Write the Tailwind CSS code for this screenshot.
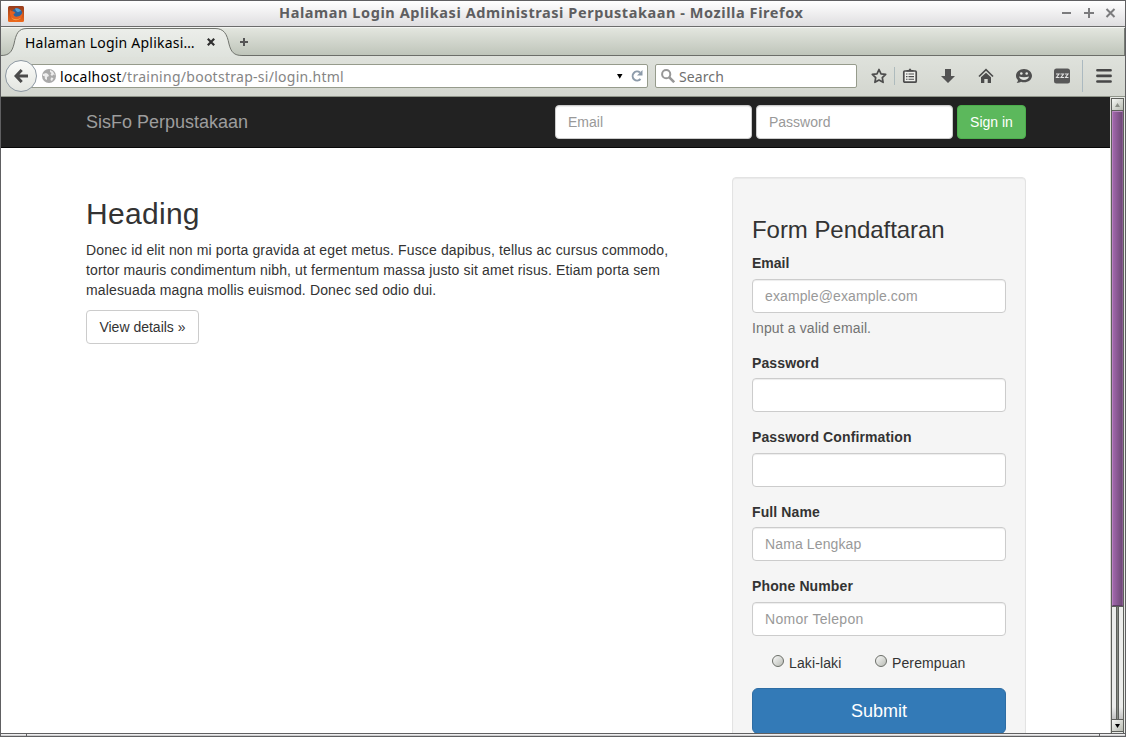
<!DOCTYPE html>
<html lang="id">
<head>
<meta charset="utf-8">
<title>Halaman Login Aplikasi Administrasi Perpustakaan</title>
<script src="https://cdn.jsdelivr.net/npm/@tailwindcss/browser@4"></script>
</head>
<body class="w-[1126px] h-[737px] overflow-hidden bg-white">
<div class="w-[1126px] h-[737px] flex flex-col border border-[#606062] font-['Noto_Sans',sans-serif]">

  <!-- window title bar -->
  <header class="h-[26px] shrink-0 flex items-center pl-[7px] bg-linear-to-b from-white to-[#dfdee0] border-b border-[#6c6c6c]">
    <svg class="w-4 h-4 shrink-0" viewBox="0 0 16 16"><defs><linearGradient id="fx" x1="0" y1="0" x2="0" y2="1"><stop offset="0" stop-color="#963a1a"/><stop offset="1" stop-color="#ef6a1c"/></linearGradient></defs><rect width="16" height="16" rx="1.5" fill="url(#fx)"/><circle cx="9" cy="7.5" r="5.2" fill="#2d659e"/><path d="M7 2.5c2-.8 5 .2 6 2.500-1 .5-2 .2-3 1.200L8 5z" fill="#58a4d6"/><path d="M2 3c0 1 .5 1.500 1 2l3 .5 1.500 1.500-2 1c0 2 2 3 4 2.500 3-.5 4.500-2 5-5 .8 4-.8 8.500-6 8.800C4 14.500 1 10 2 3z" fill="#e8621f"/><path d="M3 11c2 2.500 7 3.300 10 .5-2 3.500-8 4-10-.5z" fill="#f7a545"/></svg>
    <h1 class="ml-[255px] w-[600px] pb-[2px] text-[14.5px] leading-[23px] font-bold text-[#5e5e60] whitespace-nowrap tracking-[0.57px]">Halaman Login Aplikasi Administrasi Perpustakaan - Mozilla Firefox</h1>
    <svg class="ml-[183px] mb-[2px] w-[54px] h-[12px] shrink-0" viewBox="0 0 54 12" fill="none" stroke="#7b7b7d" stroke-width="2"><path d="M0 6h9M22 6h10M27 1v10"/><path d="M44.500 2l8 8M52.500 2l-8 8"/></svg>
  </header>

  <!-- tab strip -->
  <nav class="h-[29px] shrink-0 relative flex items-center bg-linear-to-b from-[#e3e6df] to-[#bfc5ba] border-t border-b border-t-[#f4f5f2] border-b-[#6c6e69]">
    <svg class="absolute left-0 -top-px w-[245px] h-[30px]" viewBox="0 0 245 30"><defs><linearGradient id="tb" x1="0" y1="0" x2="0" y2="1"><stop offset="0" stop-color="#eceeea"/><stop offset="1" stop-color="#dfe3dd"/></linearGradient></defs><path d="M0 30V28.500C8 28.500 11 25 13 17C15 7 17 1.500 26 1.500H214C223 1.500 226 7 228 17C230 25 233 28.500 241 28.500V30Z" fill="url(#tb)"/><path d="M0 28.500C8 28.500 11 25 13 17C15 7 17 1.500 26 1.500H214C223 1.500 226 7 228 17C230 25 233 28.500 241 28.500" fill="none" stroke="#72756f"/></svg>
    <span class="relative ml-[24px] pt-px w-[172px] text-[14px] tracking-[0.22px] text-black whitespace-nowrap">Halaman Login Aplikasi…</span>
    <svg class="relative ml-[10px] w-2 h-2" viewBox="0 0 8 8" stroke="#2f2f2f" stroke-width="2.200"><path d="M.8.8l6.400 6.400M7.200.8L.8 7.200"/></svg>
    <svg class="relative ml-[25px] w-2 h-2" viewBox="0 0 8 8" stroke="#555" stroke-width="2"><path d="M0 4h8M4 0v8"/></svg>
    <i class="ml-auto w-px h-full bg-[#767b74]"></i>
  </nav>

  <!-- toolbar -->
  <div class="h-[41px] shrink-0 flex items-center bg-linear-to-b from-[#dfe2dc] to-[#d3d6cf] border-b border-[#90958a]">
    <div class="relative z-10 ml-[4px] w-8 h-8 shrink-0 rounded-full border border-[#8d98a2] bg-linear-to-b from-[#fafbf9] to-[#e4e6e1] flex items-center justify-center">
      <svg class="w-[14px] h-[14px]" viewBox="0 0 14 14" fill="none" stroke="#4b4b4b" stroke-width="3"><path d="M7.700 1L2 7l5.700 6M2.200 7H14"/></svg>
    </div>
    <div class="-ml-[10px] w-[621px] h-6 shrink-0 flex items-center border border-[#969b8c] bg-white rounded-[2px] pl-[14px]">
      <svg class="w-[14px] h-[14px] shrink-0" viewBox="0 0 14 14"><circle cx="7" cy="7" r="7" fill="#a9a9a9"/><path d="M1 5l3-1 2 1 1 2-2 1v3l-2-1-.5-3L1 7zM8 1l3 1.500 2 4-1.500-1L10 7 8.500 5.500 9.500 4 8 3zM9 8.500l2.500.5L10 12l-1.500-1z" fill="#ededed"/></svg>
      <span class="ml-[4px] pt-px text-[14px] tracking-[0.27px] whitespace-nowrap text-[#858585]"><span class="text-black">localhost</span>/training/bootstrap-si/login.html</span>
      <svg class="ml-auto w-[6px] h-[5px]" viewBox="0 0 6 5"><path d="M0 0h5.500L2.750 4.800z" fill="#000"/></svg>
      <svg class="ml-[8px] mr-[4px] w-[12px] h-[12px]" viewBox="0 0 12 12"><path d="M9.500 9A4.500 4.500 0 1 1 9 2.500" fill="none" stroke="#8d9baa" stroke-width="2"/><path d="M11.500 0v5.500H6z" fill="#8d9baa"/></svg>
    </div>
    <div class="ml-[7px] w-[202px] h-6 shrink-0 flex items-center border border-[#969b8c] bg-white rounded-[2px] pl-[5px]">
      <svg class="w-[14px] h-[14px]" viewBox="0 0 14 14" fill="none" stroke="#979797"><circle cx="5.200" cy="5.200" r="4.100" stroke-width="2"/><path d="M8.300 8.300l4.900 4.900" stroke-width="2.600"/></svg>
      <span class="ml-[4px] pt-px text-[14px] tracking-[0.1px] text-[#6f6f6f]">Search</span>
    </div>
    <svg class="ml-[14px] w-4 h-4 shrink-0" viewBox="0 0 16 16"><path d="M8 1.500l2 4.300 4.700.6-3.400 3.200.8 4.700L8 12l-4.100 2.300.8-4.700L1.300 6.400 6 5.800z" fill="none" stroke="#4c4c4c" stroke-width="1.700" stroke-linejoin="round"/></svg>
    <i class="ml-[7px] w-px h-[18px] bg-[#aebbbd]"></i>
    <svg class="ml-[7px] w-4 h-4 shrink-0" viewBox="0 0 16 16"><rect x="1.800" y="3" width="12.400" height="11.200" rx="1" fill="#eff0ec" stroke="#4c4c4c" stroke-width="1.700"/><path d="M4.500 3.500V2h2L8 .3 9.500 2h2v1.500z" fill="#4c4c4c"/><path d="M4 6h1.500M6.500 6H12M4 8.600h1.500M6.500 8.600H12M4 11.200h1.500M6.500 11.200H12" stroke="#4c4c4c" stroke-width="1.100"/></svg>
    <svg class="ml-[22px] w-4 h-4 shrink-0" viewBox="0 0 16 16"><path d="M5 1h6v7h4l-7 7-7-7h4z" fill="#535353"/></svg>
    <svg class="ml-[22px] w-4 h-4 shrink-0" viewBox="0 0 16 16" fill="#4c4c4c"><path d="M8 4.700l5 4.500V15H9.700v-4H6.300v4H3V9.200z"/><path d="M1 8.500l7-6.800 7 6.800" fill="none" stroke="#4c4c4c" stroke-width="1.700"/></svg>
    <svg class="ml-[22px] w-4 h-4 shrink-0" viewBox="0 0 16 16"><path d="M8 1C3.500 1 0 4 0 7.700c0 2 .9 3.300 2 4.300 0 1-.4 2-1.300 3 2 0 3.300-.5 4.300-1.200 1 .4 2 .5 3 .5 4.500 0 8-3 8-6.600S12.500 1 8 1z" fill="#4f4f4f"/><circle cx="5.300" cy="5.500" r="1.300" fill="#e2e4df"/><circle cx="10.700" cy="5.500" r="1.300" fill="#e2e4df"/><path d="M3 8.500c3 1 7 1 10 0-.5 2.300-2.500 3.500-5 3.500s-4.500-1.200-5-3.500z" fill="#e2e4df"/></svg>
    <svg class="ml-[22px] w-4 h-4 shrink-0" viewBox="0 0 16 16"><rect y=".5" width="16" height="15" rx="2.500" fill="#585858"/><path d="M2 6h3L2.500 9.500h3M6.500 6h3L7 9.500h3M11 6h3l-2.500 3.500h3" fill="none" stroke="#e2e2e2" stroke-width="1.100"/></svg>
    <i class="ml-[12px] w-px h-[32px] bg-[#abb9c0]"></i>
    <svg class="ml-[13px] w-4 h-4 shrink-0" viewBox="0 0 16 16" stroke="#474747" stroke-width="2.600" stroke-linecap="round"><path d="M1.400 2.300h13.200M1.400 7.900h13.200M1.400 13.500h13.200"/></svg>
  </div>

  <!-- viewport -->
  <div class="h-[636px] shrink-0 flex overflow-hidden">
    <div class="w-[1109px] h-full shrink-0 overflow-hidden bg-white font-['Liberation_Sans',Arial,sans-serif] text-[14px] leading-[20px] text-[#333]">
      <div class="h-[51px] bg-[#222] border-b border-[#080808] flex items-start pl-[85px]">
        <a class="w-[469px] text-[18px] leading-[20px] mt-[15px] text-[#9d9d9d] whitespace-nowrap">SisFo Perpustakaan</a>
        <div class="mt-[8px] flex gap-1">
          <input type="text" placeholder="Email" class="block w-[197px] h-[34px] px-3 bg-white border border-[#ccc] rounded-[4px] shadow-[inset_0_1px_1px_rgba(0,0,0,.075)] placeholder:text-[#999]">
          <input type="text" placeholder="Password" class="block w-[197px] h-[34px] px-3 bg-white border border-[#ccc] rounded-[4px] shadow-[inset_0_1px_1px_rgba(0,0,0,.075)] placeholder:text-[#999]">
          <button class="w-[69px] h-[34px] bg-[#5cb85c] border border-[#4cae4c] rounded-[4px] text-white whitespace-nowrap">Sign in</button>
        </div>
      </div>
      <div class="flex items-start pl-[85px]">
        <section class="w-[646px] pt-[49px]">
          <h2 class="text-[30px] leading-[33px] tracking-[0.3px]">Heading</h2>
          <p class="mt-[10px] whitespace-nowrap tracking-[0.14px]">Donec id elit non mi porta gravida at eget metus. Fusce dapibus, tellus ac cursus commodo,<br>tortor mauris condimentum nibh, ut fermentum massa justo sit amet risus. Etiam porta sem<br>malesuada magna mollis euismod. Donec sed odio dui.</p>
          <button class="mt-[10px] w-[113px] h-[34px] border border-[#ccc] rounded-[4px] bg-white">View details »</button>
        </section>
        <form class="mt-[29px] w-[294px] h-[620px] shrink-0 bg-[#f5f5f5] border border-[#e3e3e3] rounded-[4px] p-[19px] shadow-[inset_0_1px_1px_rgba(0,0,0,.05)] tracking-[0.12px]">
          <h3 class="mt-[20px] text-[24px] leading-[26px] mb-[10px] tracking-[-0.05px]">Form Pendaftaran</h3>
          <div class="h-[99.5px] flex flex-col">
            <label class="font-bold mb-[6px] tracking-normal">Email</label>
            <input type="text" placeholder="example@example.com" class="w-full h-[34px] shrink-0 px-3 bg-white border border-[#ccc] rounded-[4px] shadow-[inset_0_1px_1px_rgba(0,0,0,.075)] placeholder:text-[#999]">
            <p class="mt-[5px] text-[#737373]">Input a valid email.</p>
          </div>
          <div class="h-[74.5px] flex flex-col">
            <label class="font-bold mb-[5.5px]">Password</label>
            <input type="password" class="w-full h-[34px] shrink-0 px-3 bg-white border border-[#ccc] rounded-[4px] shadow-[inset_0_1px_1px_rgba(0,0,0,.075)]">
          </div>
          <div class="h-[74.5px] flex flex-col">
            <label class="font-bold mb-[5.5px]">Password Confirmation</label>
            <input type="password" class="w-full h-[34px] shrink-0 px-3 bg-white border border-[#ccc] rounded-[4px] shadow-[inset_0_1px_1px_rgba(0,0,0,.075)]">
          </div>
          <div class="h-[74.5px] flex flex-col">
            <label class="font-bold mb-[5.5px]">Full Name</label>
            <input type="text" placeholder="Nama Lengkap" class="w-full h-[34px] shrink-0 px-3 bg-white border border-[#ccc] rounded-[4px] shadow-[inset_0_1px_1px_rgba(0,0,0,.075)] placeholder:text-[#999]">
          </div>
          <div class="h-[74.5px] flex flex-col">
            <label class="font-bold mb-[5.5px]">Phone Number</label>
            <input type="text" placeholder="Nomor Telepon" class="w-full h-[34px] shrink-0 px-3 bg-white border border-[#ccc] rounded-[4px] shadow-[inset_0_1px_1px_rgba(0,0,0,.075)] tracking-[0.3px] placeholder:text-[#999]">
          </div>
          <div class="h-[37px] pt-[2px] pl-[20px] flex items-start">
            <label class="w-[103px] flex"><i class="mt-[2px] mr-[5px] w-[12px] h-[12px] shrink-0 rounded-full border border-[#6b6e68] bg-linear-to-br from-[#fafafa] to-[#b9bcb5]"></i>Laki-laki</label>
            <label class="flex"><i class="mt-[2px] mr-[5px] w-[12px] h-[12px] shrink-0 rounded-full border border-[#6b6e68] bg-linear-to-br from-[#fafafa] to-[#b9bcb5]"></i>Perempuan</label>
          </div>
          <button class="block w-full h-[46px] bg-[#337ab7] border border-[#2e6da4] rounded-[6px] text-white text-[18px] leading-[24px] tracking-normal">Submit</button>
        </form>
      </div>
    </div>
    <!-- scrollbar -->
    <div class="w-[15px] h-full shrink-0 flex flex-col border-l border-l-[#dcdcd6] bg-[#e9ebe7] pt-px pr-px">
      <div class="h-full flex flex-col border-x border-[#5d5f5b]">
        <div class="h-[13px] shrink-0 border-y border-[#5d5f5b] bg-linear-to-br from-[#f6f7f4] to-[#b8bbb2] flex items-center justify-center"><svg class="w-[5px] h-[4px]" viewBox="0 0 5 4"><path d="M0 4h5L2.500 0z" fill="#8b8e86"/></svg></div>
        <div class="h-[495px] shrink-0 border border-[#8a5d92] border-b-[#5e3d66] border-t-[#b98cc0] border-l-[#b580bf] bg-linear-to-r from-[#a267ac] to-[#6f4a78]"></div>
        <div class="flex-1 flex justify-center border-t border-[#5d5f5b] bg-[linear-gradient(to_bottom,#ecedeb_calc(100%-12px),#c2c2c2)]"><i class="w-[3px] h-full bg-[#868b82] border-x border-[#5d5f5b]"></i></div>
        <div class="h-[13px] mb-px shrink-0 border-y border-[#5d5f5b] bg-linear-to-br from-[#f6f7f4] to-[#b8bbb2] flex items-center justify-center"><svg class="w-[5px] h-[4px]" viewBox="0 0 5 4"><path d="M0 0h5L2.500 4z" fill="#000"/></svg></div>
      </div>
    </div>
  </div>

  <!-- window bottom grip -->
  <footer class="flex-1 flex border-t border-[#606062] bg-linear-to-b from-white to-[#bcbcbe]">
    <i class="ml-[25px] w-px h-full bg-[#606062]"></i>
    <i class="ml-auto mr-[25px] w-px h-full bg-[#606062]"></i>
  </footer>
</div>
</body>
</html>
